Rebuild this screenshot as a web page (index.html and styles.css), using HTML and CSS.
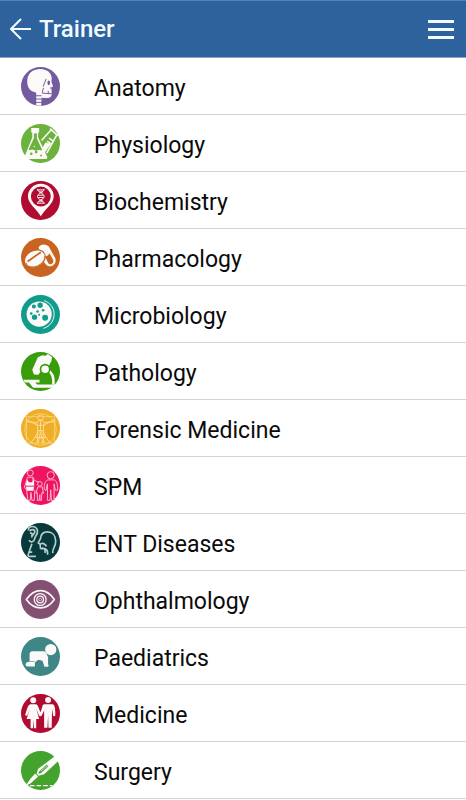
FILE: index.html
```html
<!DOCTYPE html>
<html lang="en">
<head>
<meta charset="utf-8">
<meta name="viewport" content="width=device-width, initial-scale=1">
<title>Trainer</title>
<link rel="stylesheet" href="styles.css">
</head>
<body>
<header class="bar">
  <button class="icon-button" type="button" aria-label="Back">
    <svg class="back" viewBox="0 0 22 22" aria-hidden="true"><path d="M21 11H2M11 1L1 11l10 10"/></svg>
  </button>
  <h1 class="title">Trainer</h1>
  <button class="icon-button" type="button" aria-label="Menu">
    <svg class="menu" viewBox="0 0 26 20" aria-hidden="true"><path d="M0 1h26v3H0zM0 9h26v3H0zM0 17h26v3H0z"/></svg>
  </button>
</header>
<main>
<ul class="list">
  <li><a class="row" href="#anatomy">
    <svg class="badge" viewBox="0 0 118 118" aria-hidden="true">
      <circle class="violet" cx="59" cy="59" r="59"/>
      <path class="w" d="M51 7C72 3 93 15 93 35l-1 9 5 15-5 3 1 20c0 9-5 12-14 12l-17-1-1 24-15-1V78l-8-3C25 71 18 58 19 40 20 21 34 9 51 7z"/>
      <path class="l violet-line" d="M76 36L67 59M68 63l-4 15M64 79l29 2M82 72l1 8M45 87h17M45 97h17M45 107h17" stroke-width="3"/>
      <ellipse class="violet" cx="84" cy="48" rx="4" ry="7"/><path class="violet" d="M91 58l2 8-5-1z"/>
    </svg><span class="name">Anatomy</span></a></li>
  <li><a class="row" href="#physiology">
    <svg class="badge" viewBox="0 0 118 118" aria-hidden="true">
      <circle class="lime" cx="59" cy="59" r="59"/>
      <path class="w" d="M31 12h24v14h-3v15l27 57c2 5-1 8-6 8H16c-5 0-7-4-5-8l23-57V26h-3z"/>
      <path class="lime" d="M39 29h9v15l16 34c-6 4-10-1-15 2-7 4-12-5-18-2-4 2-6 0-8-1l16-34z"/>
      <path class="l" d="M88 14l24 22M90 19L62 50M107 35L78 88M85 43l12 9M79 52l12 8" stroke-width="5"/>
      <path class="w" d="M74 56l17 4-20 28-7-14z"/>
      <circle class="lime" cx="31" cy="90" r="4"/><circle class="lime" cx="46" cy="85" r="4"/><circle class="lime" cx="61" cy="95" r="3"/>
      <circle class="w" cx="40" cy="68" r="2"/>
    </svg><span class="name">Physiology</span></a></li>
  <li><a class="row" href="#biochemistry">
    <svg class="badge" viewBox="0 0 118 118" aria-hidden="true">
      <circle class="crimson" cx="59" cy="59" r="59"/>
      <path class="w" d="M60 107C50 87 21 69 21 47a39 39 0 0 1 78 0c0 22-29 40-39 60z"/>
      <circle class="crimson" cx="60" cy="47" r="30"/>
      <path class="l" d="M50 24c0 11 20 12 20 23S50 57 50 69M70 24c0 11-20 12-20 23s20 10 20 22M50 27h20M54 33h12M52 43h16M52 50h16M54 61h12M50 67h20" stroke-width="3"/>
    </svg><span class="name">Biochemistry</span></a></li>
  <li><a class="row" href="#pharmacology">
    <svg class="badge" viewBox="0 0 118 118" aria-hidden="true">
      <circle class="orange" cx="59" cy="59" r="59"/>
      <path class="w" d="M53 29c5-11 21-13 31-3l19 34c8 17-12 34-27 21l-8-10z"/>
      <path class="orange" d="M73 56c6-1 11-5 13-10l11 20c4 9-6 17-14 11z"/>
      <ellipse class="w orange-line" cx="42" cy="63" rx="33" ry="25" transform="rotate(-28 42 63)" stroke-width="3"/>
      <path class="l orange-line" d="M15 75c4 17 30 16 45 3 8-6 13-14 12-24" stroke-width="3"/>
      <path class="l orange-line" d="M20 71L60 43" stroke-width="5"/>
    </svg><span class="name">Pharmacology</span></a></li>
  <li><a class="row" href="#microbiology">
    <svg class="badge" viewBox="0 0 118 118" aria-hidden="true">
      <circle class="teal" cx="59" cy="59" r="59"/>
      <circle class="w" cx="55" cy="58" r="38"/>
      <path class="l" d="M70 17c41 14 40 71-2 84" stroke-width="3"/>
      <g class="teal"><circle cx="58" cy="31" r="8"/><circle cx="39" cy="35" r="6"/><circle cx="31" cy="56" r="4"/><circle cx="41" cy="67" r="8"/><circle cx="50" cy="50" r="4"/><circle cx="67" cy="46" r="4"/><circle cx="73" cy="69" r="9"/><circle cx="55" cy="60" r="3"/></g>
    </svg><span class="name">Microbiology</span></a></li>
  <li><a class="row" href="#pathology">
    <svg class="badge" viewBox="0 0 118 118" aria-hidden="true">
      <circle class="green" cx="59" cy="59" r="59"/>
      <path class="w" d="M51 16l13-6 10 1 7-5 13 9-2 12-8 15-25 17-6 10-14-1-5-14z"/>
      <path class="l" d="M80 54c16 8 20 22 18 45" stroke-width="8"/>
      <circle class="w green-line" cx="73" cy="52" r="14" stroke-width="5"/>
      <path class="w" d="M7 84h49v8H43l6 6h54v10H37L24 92H12z"/>
    </svg><span class="name">Pathology</span></a></li>
  <li><a class="row" href="#forensic-medicine">
    <svg class="badge" viewBox="0 0 118 118" aria-hidden="true">
      <circle class="amber" cx="59" cy="59" r="59"/>
      <g class="l cream-line" stroke-width="3"><circle cx="59" cy="62" r="48" stroke-width="2"/><path d="M17 23h84v80H17z" stroke-width="2"/><circle cx="59" cy="26" r="8"/><path d="M14 38l34 3 5-6h12l5 6 34-3M14 32l35 16M104 32L69 48M49 43l2 25-8 17-15 20M69 43l-2 25 8 17 15 20M52 68l-4 36M66 68l4 36M59 69l-7 35M59 69l7 35M51 66h16M42 86h33M52 50h14M59 37v31"/></g>
    </svg><span class="name">Forensic Medicine</span></a></li>
  <li><a class="row" href="#spm">
    <svg class="badge" viewBox="0 0 118 118" aria-hidden="true">
      <circle class="pink" cx="59" cy="59" r="59"/>
      <g class="l blush-line" stroke-width="3"><circle cx="28" cy="21" r="9"/><path d="M20 34h16l5 10 13 5M20 34L10 64l7 9M17 73l4 31h7l2-24 3 24h7l2-31M36 34v15"/><circle cx="90" cy="28" r="11"/><path d="M82 42h17c9 1 12 13 12 31h-7l-4-19v50h-8l-2-32-2 32h-8V54l-5 21-5-5c0-17 4-27 12-28z"/><circle cx="57" cy="54" r="7"/><path d="M51 63h13l4 20-5-3-1 24h-4l-1-17-2 17h-5l-1-24-4 3z"/></g>
      <path class="w" d="M18 41l6 8h10l5-8 1 18-2 16H18l-4-14z"/>
      <path class="l pink-line" d="M13 61h27" stroke-width="3"/>
    </svg><span class="name">SPM</span></a></li>
  <li><a class="row" href="#ent-diseases">
    <svg class="badge" viewBox="0 0 118 118" aria-hidden="true">
      <circle class="deep" cx="59" cy="59" r="59"/>
      <g class="l mist-line" stroke-width="5"><path d="M23 23c-5-16 25-18 27 2 1 10-8 15-9 23-1 9-12 13-17 4M27 25c2-7 14-7 15 1 0 8-10 10-10 18M27 31c8-2 9 5 4 8M33 63l-11 32c-2 6 3 7 9 6h14M26 88h8"/><path d="M96 91c-2-14 9-18 9-36 0-17-10-28-25-28-13 0-20 8-21 20l-7 13 6 5 1 12c8 2 13-2 17 3 6 4 5 11 4 16M59 63c9-4 15 2 18 8M64 76c10-1 9 8 9 15"/></g>
    </svg><span class="name">ENT Diseases</span></a></li>
  <li><a class="row" href="#ophthalmology">
    <svg class="badge" viewBox="0 0 118 118" aria-hidden="true">
      <circle class="plum" cx="59" cy="59" r="59"/>
      <g class="l" stroke-width="5"><path d="M16 59c25-36 61-36 85 0-24 34-60 34-85 0z"/><circle cx="58" cy="59" r="18" stroke-width="4"/><circle cx="58" cy="59" r="10" stroke-width="4"/></g>
      <circle class="l" cx="58" cy="59" r="4" stroke-width="2"/>
    </svg><span class="name">Ophthalmology</span></a></li>
  <li><a class="row" href="#paediatrics">
    <svg class="badge" viewBox="0 0 118 118" aria-hidden="true">
      <circle class="sea" cx="59" cy="59" r="59"/>
      <circle class="w" cx="90" cy="38" r="17"/>
      <path class="w" d="M34 43h36c6 2 9 10 12 18v22c3 3 2 7-2 7h-9l-6-18-13-3-10 8v12H24c-5 0-10 0-10-6 0-5 5-8 12-8V52c0-5 3-8 8-9z"/>
      <path class="l sea-line" d="M26 74h15" stroke-width="2"/>
    </svg><span class="name">Paediatrics</span></a></li>
  <li><a class="row" href="#medicine">
    <svg class="badge" viewBox="0 0 118 118" aria-hidden="true">
      <circle class="crimson" cx="59" cy="59" r="59"/>
      <circle class="w" cx="37" cy="19" r="9"/><circle class="w" cx="82" cy="18" r="9"/>
      <path class="w" d="M28 31h18c6 2 8 15 13 24 5-9 4-21 10-24h27c7 2 8 16 8 34-4 4-7 2-7-1l-3-19-1 57H83l-1-37-2 37H70V50l-7 14c-2 4-6 4-9 0L46 44l9 32H46v28h-7l-1-27-2 27h-7V76H17l10-32-8 21c-4 2-6 0-6-3 5-14 7-29 15-31z"/>
    </svg><span class="name">Medicine</span></a></li>
  <li><a class="row" href="#surgery">
    <svg class="badge" viewBox="0 0 118 118" aria-hidden="true">
      <circle class="leaf" cx="59" cy="59" r="59"/>
      <path class="w" d="M101 17c6 3 9 7 12 13L70 70l-17 5-6-8 5-13z"/>
      <path class="leaf" d="M78 41l5 5-23 21-7 2 1-6z"/>
      <path class="l" d="M60 61l21-18" stroke-width="2"/>
      <path class="w" d="M43 68l9 9-24 22-14 6 15-22z"/>
      <path class="l" d="M27 105h68" stroke-width="4" stroke-dasharray="14 6"/>
    </svg><span class="name">Surgery</span></a></li>
</ul>
</main>
</body>
</html>
```
FILE: styles.css
```css
* {
  box-sizing: border-box;
}

body {
  margin: 0;
  background: #fff;
  color: #0a0a0a;
  font-family: Roboto, "Liberation Sans", sans-serif;
}

.bar {
  display: flex;
  align-items: center;
  gap: 7px;
  height: 58px;
  padding: 0 12px 0 10px;
  background: #2e629c;
  border-top: 1px solid #4d83bf;
  border-bottom: 1px solid #88a5c9;
}

.icon-button {
  display: flex;
  padding: 0;
  border: 0;
  background: none;
  cursor: pointer;
}

.back {
  width: 22px;
  height: 22px;
  fill: none;
  stroke: #f0fbff;
  stroke-width: 2;
}

.menu {
  width: 26px;
  height: 20px;
  fill: #f0fbff;
}

.title {
  flex: 1;
  margin: 0;
  color: #f0fbff;
  font-size: 24px;
  line-height: 32px;
  font-weight: 500;
}

.list {
  margin: 0;
  padding: 0;
  list-style: none;
}

.row {
  display: flex;
  align-items: center;
  gap: 34px;
  height: 57px;
  padding: 1px 21px 0;
  border-bottom: 1px solid #d3d3d3;
  color: inherit;
  text-decoration: none;
}

.name {
  padding-top: 4px;
  font-size: 23px;
  line-height: 32px;
}

.badge {
  flex: none;
  width: 39px;
  height: 39px;
}

.w { fill: #fbfaf8; }
.l {
  fill: none;
  stroke: #fbf5f5;
  stroke-linejoin: round;
}

.violet { fill: #745a9f; }
.lime { fill: #6bb33c; }
.crimson { fill: #b00b31; }
.orange { fill: #c8641f; }
.teal { fill: #0f9c8b; }
.green { fill: #399c0b; }
.amber { fill: #f0ae27; }
.pink { fill: #ee1462; }
.deep { fill: #083a3d; }
.plum { fill: #834f73; }
.sea { fill: #3f8786; }
.leaf { fill: #43a32c; }

.violet-line { stroke: #745a9f; }
.orange-line { stroke: #c8641f; }
.green-line { stroke: #399c0b; }
.cream-line { stroke: #fbdc94; }
.blush-line { stroke: #fbb5cd; }
.pink-line { stroke: #ee1462; }
.mist-line { stroke: #b5cfcd; }
.sea-line { stroke: #3f8786; }
```
